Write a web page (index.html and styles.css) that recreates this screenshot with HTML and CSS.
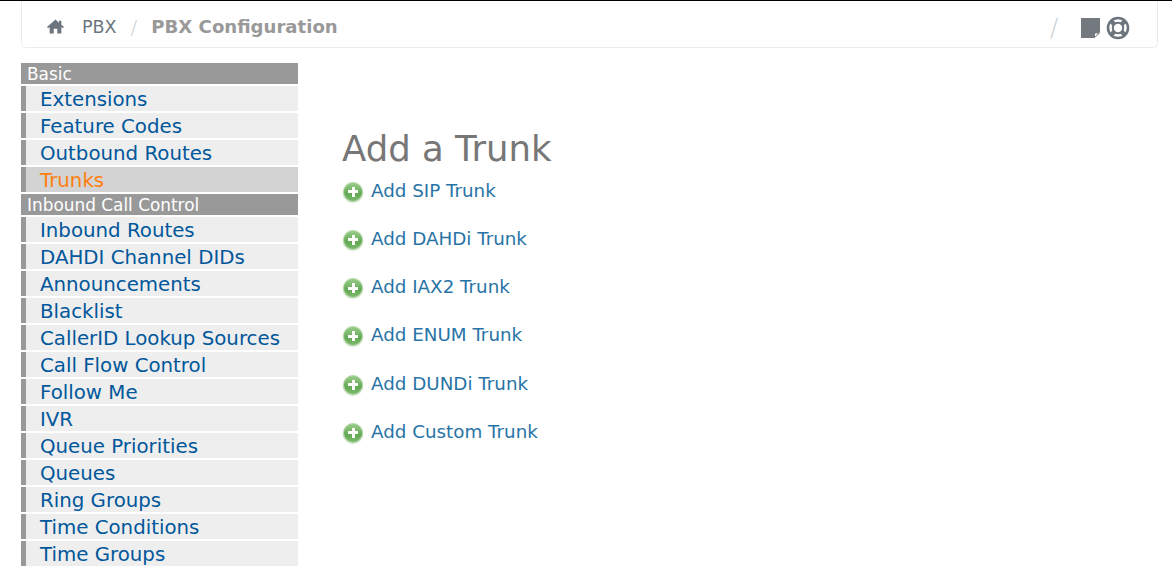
FILE: index.html
```html
<!DOCTYPE html>
<html lang="en">
<head>
<meta charset="utf-8">
<title>PBX Configuration</title>
<link rel="stylesheet" href="styles.css">
</head>
<body>
<div class="crumbs">
  <nav class="crumb-left">
    <svg class="home" viewBox="0 0 16 14" width="17" height="15"><path d="M8 0.5 L0 7.5 L1 8.6 L2.5 7.4 V13.5 H6.3 V9 H9.7 V13.5 H13.5 V7.4 L15 8.6 L16 7.5 L13.5 5.3 V1.5 H11.3 V3.4 Z"/></svg>
    <span class="crumb">PBX</span>
    <span class="sep">/</span>
    <span class="crumb-active">PBX Configuration</span>
  </nav>
  <div class="crumb-right">
    <span class="sep sep-right">/</span>
    <svg class="note" viewBox="0 0 20 20" width="20" height="20"><path d="M1 0 H20 V14 L14 20 H1 Z" fill="#74787f"/><path d="M14.5 19.5 V15 H19.5 Z" fill="#fff" stroke="#74787f"/></svg>
    <svg class="ring" viewBox="0 0 24 24" width="24" height="24"><circle cx="12" cy="12" r="10" fill="none" stroke="#6c757d" stroke-width="2.6"/><circle cx="12" cy="12" r="5.2" fill="none" stroke="#6c757d" stroke-width="2"/><path d="M8.5 8.5 L5 5 M15.5 8.5 L19 5 M8.5 15.5 L5 19 M15.5 15.5 L19 19" stroke="#6c757d" stroke-width="4.5"/></svg>
  </div>
</div>
<main class="layout">
  <aside class="menu">
    <div class="menu-head">Basic</div>
    <a class="menu-item">Extensions</a>
    <a class="menu-item">Feature Codes</a>
    <a class="menu-item">Outbound Routes</a>
    <a class="menu-item is-active">Trunks</a>
    <div class="menu-head">Inbound Call Control</div>
    <a class="menu-item">Inbound Routes</a>
    <a class="menu-item">DAHDI Channel DIDs</a>
    <a class="menu-item">Announcements</a>
    <a class="menu-item">Blacklist</a>
    <a class="menu-item">CallerID Lookup Sources</a>
    <a class="menu-item">Call Flow Control</a>
    <a class="menu-item">Follow Me</a>
    <a class="menu-item">IVR</a>
    <a class="menu-item">Queue Priorities</a>
    <a class="menu-item">Queues</a>
    <a class="menu-item">Ring Groups</a>
    <a class="menu-item">Time Conditions</a>
    <a class="menu-item">Time Groups</a>
  </aside>
  <section class="content">
    <h2 class="title">Add a Trunk</h2>
    <a class="add"><span class="plus"></span>Add SIP Trunk</a>
    <a class="add"><span class="plus"></span>Add DAHDi Trunk</a>
    <a class="add"><span class="plus"></span>Add IAX2 Trunk</a>
    <a class="add"><span class="plus"></span>Add ENUM Trunk</a>
    <a class="add"><span class="plus"></span>Add DUNDi Trunk</a>
    <a class="add"><span class="plus"></span>Add Custom Trunk</a>
  </section>
</main>
</body>
</html>
```
FILE: styles.css
```css
html, body { margin: 0; padding: 0; height: 566px; overflow: hidden; background: #fff; }
body { border-top: 1px solid #000; box-sizing: border-box; font-family: "DejaVu Sans", Verdana, sans-serif; }
.crumbs { margin: 0 14px 0 21px; height: 47px; padding-top: 5px; box-sizing: border-box; border: 1px solid #e9ecef; border-top: none; border-radius: 0 0 5px 5px; display: flex; align-items: center; justify-content: space-between; }
.crumb-left { display: flex; align-items: center; padding-left: 25px; }
.home { fill: #6c757d; margin-right: 18px; }
.crumb { font-size: 17.5px; color: #6c757d; }
.sep { font-size: 20px; color: #c8cdd2; margin: 0 14px; font-weight: 300; }
.crumb-active { font-size: 18.1px; font-weight: 700; color: #999; }
.crumb-right { display: flex; align-items: center; padding-right: 27px; padding-top: 2px; }
.sep-right { margin: 0 24px 0 -1px; font-size: 24px; }
.note { margin-right: 6px; margin-left: -2px; }
.layout { display: flex; margin-top: 15px; }
.menu { width: 277px; margin-left: 21px; flex: none; display: flex; flex-direction: column; gap: 2px; }
.menu-head { height: 21px; line-height: 23px; background: #999; color: #fff; font-size: 16.9px; padding-left: 6px; white-space: nowrap; }
.menu-item { height: 25px; line-height: 27px; background: #eee; border-left: 5px solid #999; color: #01579b; font-size: 19.8px; padding-left: 14px; white-space: nowrap; }
.menu-item.is-active { background: #d3d3d3; color: #ff7f0e; }
.content { padding: 0 0 0 44px; }
.title { margin: 62px 0 5px; height: 48px; line-height: 48px; font-size: 35.5px; font-weight: 400; color: #777; }
.add { display: flex; align-items: center; height: 24px; margin-bottom: 24.3px; font-size: 18.3px; color: #2874a6; }
.plus { width: 20px; height: 20px; border-radius: 50%; margin: 3px 8px 0 1px; background: linear-gradient(#fff, #fff) center / 10px 3px no-repeat, linear-gradient(#fff, #fff) center / 3px 10px no-repeat, linear-gradient(#9fd08f, #62a853 60%, #7fbc70); box-shadow: inset 0 0 0 1px #b5d8aa, 0 1px 1px #d5e3d0; flex: none; }
```
